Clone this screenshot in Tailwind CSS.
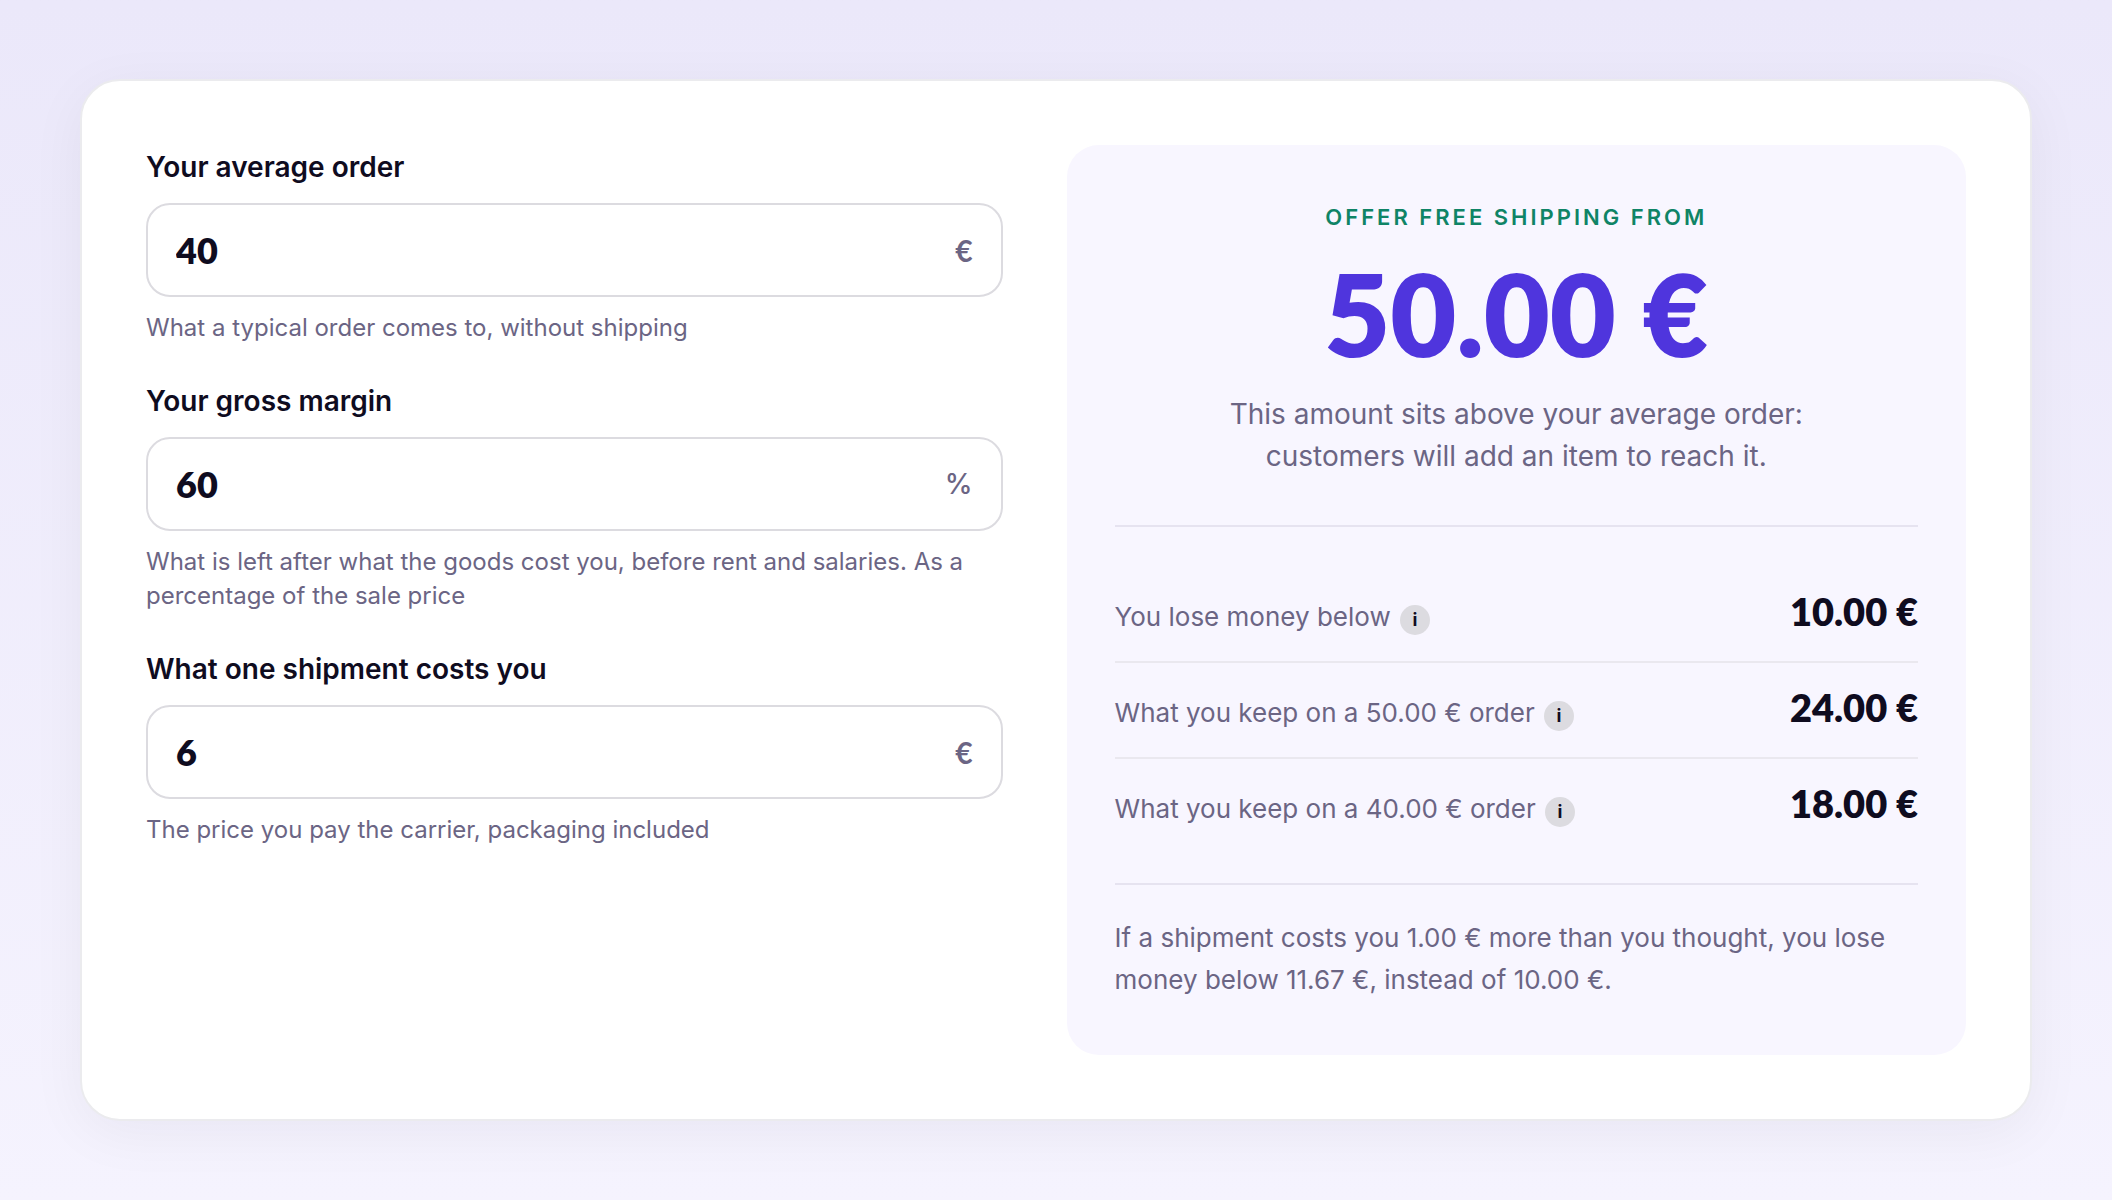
<!DOCTYPE html>
<html lang="en">
  <head>
    <meta charset="UTF-8" />
    <meta name="viewport" content="width=device-width, initial-scale=1.0" />
    <title>Free shipping calculator</title>
    <script src="https://cdn.jsdelivr.net/npm/@tailwindcss/browser@4"></script>
  </head>
  <body
    class="flex min-h-screen items-center bg-linear-to-b from-[#ebe8fa] to-[#f5f3fe] px-6 py-12 font-['Inter',sans-serif] text-[#6b6584] md:px-20"
  >
    <main
      class="grid w-full gap-16 rounded-[40px] border-2 border-[#ebebee] bg-white p-16 shadow-[0_12px_56px_rgba(15,12,35,0.05)] lg:grid-cols-[1fr_1.05fr]"
    >
      <!-- Inputs -->
      <form class="flex flex-col gap-[34px]">
        <div>
          <label for="order" class="mb-3.5 block text-[28px] leading-11 font-semibold text-[#0f0c1f]">Your average order</label>
          <div class="flex h-[94px] items-center rounded-3xl border-2 border-[#dcdbe0] px-7">
            <input id="order" type="text" inputmode="decimal" value="40" class="w-full min-w-0 flex-1 font-['Lato',sans-serif] text-4xl font-extrabold text-[#0f0c1f] outline-none" />
            <span class="font-['Lato',sans-serif] text-3xl leading-8 font-bold">€</span>
          </div>
          <p class="mt-3.5 text-2xl leading-[34px]">What a typical order comes to, without shipping</p>
        </div>
        <div>
          <label for="margin" class="mb-3.5 block text-[28px] leading-11 font-semibold text-[#0f0c1f]">Your gross margin</label>
          <div class="flex h-[94px] items-center rounded-3xl border-2 border-[#dcdbe0] px-7">
            <input id="margin" type="text" inputmode="decimal" value="60" class="w-full min-w-0 flex-1 font-['Lato',sans-serif] text-4xl font-extrabold text-[#0f0c1f] outline-none" />
            <span class="text-[28px] leading-8 font-medium">%</span>
          </div>
          <p class="mt-3.5 text-2xl leading-[34px]">What is left after what the goods cost you, before rent and salaries. As a percentage of the sale price</p>
        </div>
        <div>
          <label for="shipment" class="mb-3.5 block text-[28px] leading-11 font-semibold text-[#0f0c1f]">What one shipment costs you</label>
          <div class="flex h-[94px] items-center rounded-3xl border-2 border-[#dcdbe0] px-7">
            <input id="shipment" type="text" inputmode="decimal" value="6" class="w-full min-w-0 flex-1 font-['Lato',sans-serif] text-4xl font-extrabold text-[#0f0c1f] outline-none" />
            <span class="font-['Lato',sans-serif] text-3xl leading-8 font-bold">€</span>
          </div>
          <p class="mt-3.5 text-2xl leading-[34px]">The price you pay the carrier, packaging included</p>
        </div>
      </form>

      <!-- Result -->
      <section class="rounded-[32px] bg-[#f8f6ff] px-12 pt-14 pb-[54px]">
        <div class="border-b-2 border-[#e6e3f0] pb-12 text-center">
          <h2 class="text-[22px] leading-8 font-semibold tracking-[3px] text-[#0f8466] uppercase">Offer free shipping from</h2>
          <p class="my-6 font-['Lato',sans-serif] text-[114px] leading-[112px] font-extrabold text-[#4f35dd]">50.00 €</p>
          <p class="mx-auto max-w-[600px] text-[28px] leading-[42px]">This amount sits above your average order: customers will add an item to reach it.</p>
        </div>

        <dl class="border-b-2 border-[#e6e3f0] pt-10 pb-7">
          <div class="flex h-24 items-baseline justify-between border-b-2 border-[#eae8ef] pt-6">
            <dt class="text-[26px] leading-[42px]">
              You lose money below
              <button type="button" aria-label="About the break-even order" class="ml-0.5 inline-flex size-[30px] items-center justify-center rounded-full bg-[#dcdbe0] text-lg leading-none font-bold text-[#0f0c1f]">i</button>
            </dt>
            <dd class="font-['Lato',sans-serif] text-[38px] leading-10 font-extrabold text-[#0f0c1f]">10.00 €</dd>
          </div>
          <div class="flex h-24 items-baseline justify-between border-b-2 border-[#eae8ef] pt-6">
            <dt class="text-[26px] leading-[42px]">
              What you keep on a 50.00 € order
              <button type="button" aria-label="About a 50.00 € order" class="ml-0.5 inline-flex size-[30px] items-center justify-center rounded-full bg-[#dcdbe0] text-lg leading-none font-bold text-[#0f0c1f]">i</button>
            </dt>
            <dd class="font-['Lato',sans-serif] text-[38px] leading-10 font-extrabold text-[#0f0c1f]">24.00 €</dd>
          </div>
          <div class="flex h-24 items-baseline justify-between pt-6">
            <dt class="text-[26px] leading-[42px]">
              What you keep on a 40.00 € order
              <button type="button" aria-label="About a 40.00 € order" class="ml-0.5 inline-flex size-[30px] items-center justify-center rounded-full bg-[#dcdbe0] text-lg leading-none font-bold text-[#0f0c1f]">i</button>
            </dt>
            <dd class="font-['Lato',sans-serif] text-[38px] leading-10 font-extrabold text-[#0f0c1f]">18.00 €</dd>
          </div>
        </dl>

        <p class="mt-8 text-[26px] leading-[42px]">If a shipment costs you 1.00 € more than you thought, you lose money below 11.67 €, instead of 10.00 €.</p>
      </section>
    </main>
  </body>
</html>
